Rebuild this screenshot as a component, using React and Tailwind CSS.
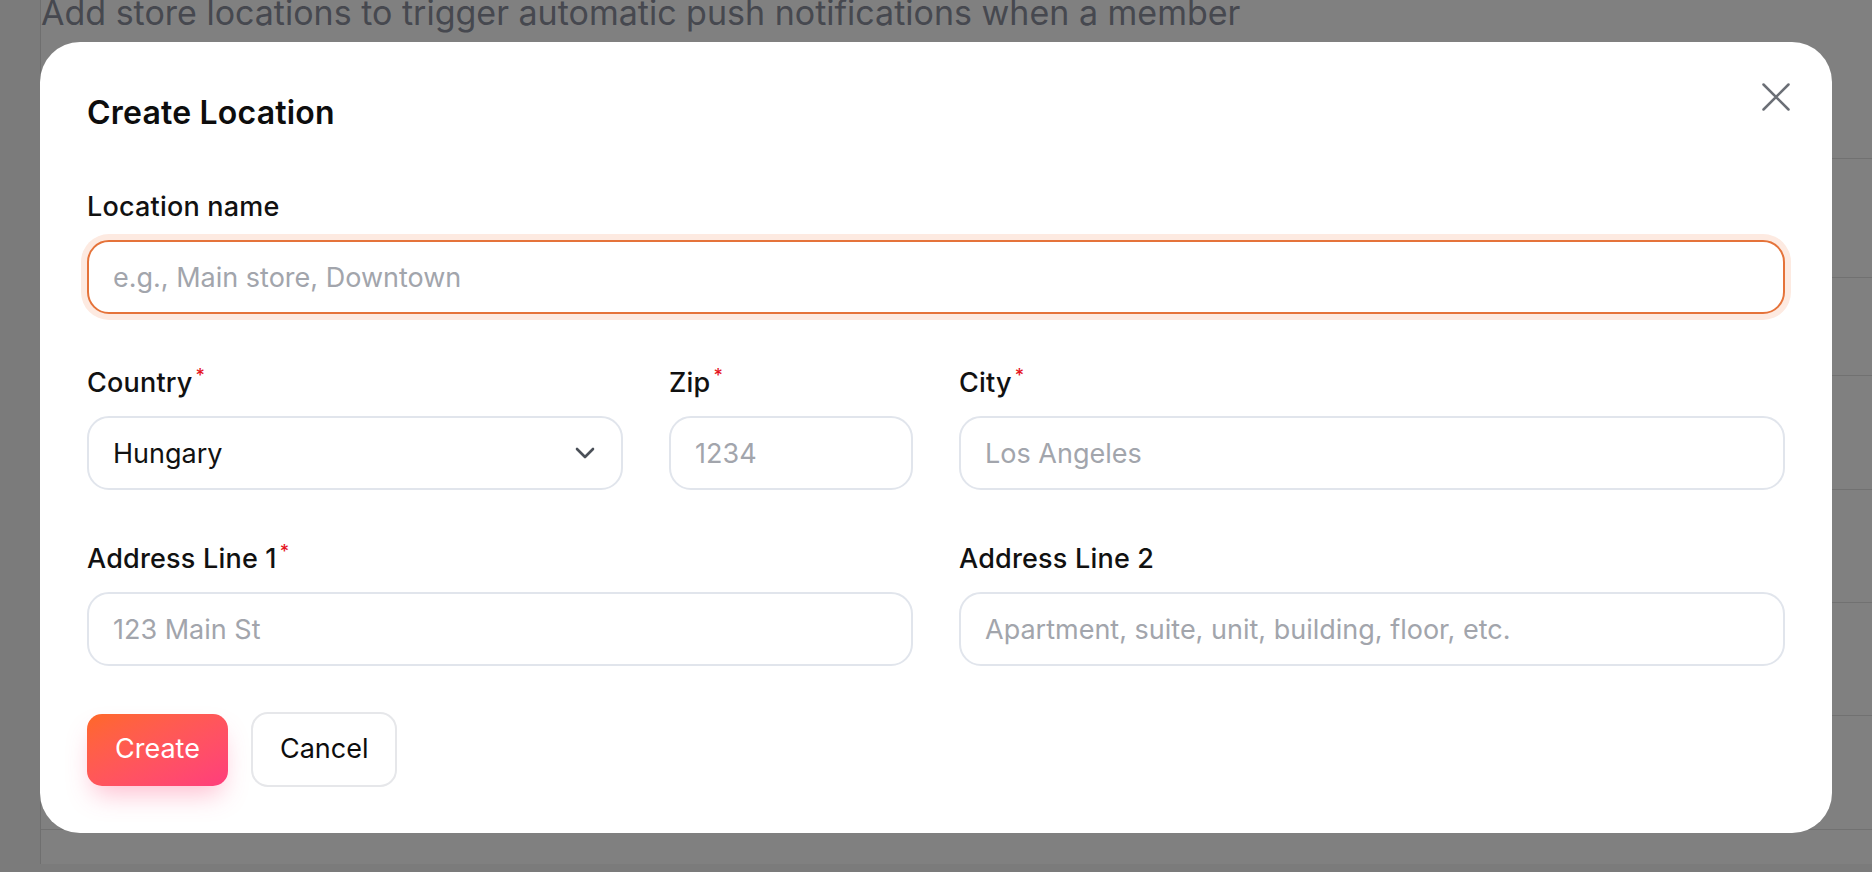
import React from "react";

function Req() {
  return (
    <span className="ml-[3px] align-super text-[18px] leading-none text-[#e5141f]">*</span>
  );
}

function Label({ children, req }) {
  return (
    <div className="mb-[15px] text-[27px] font-medium leading-[36px] tracking-[0.2px] text-[#111111]">
      {children}
      {req && <Req />}
    </div>
  );
}

function Field({ placeholder }) {
  return (
    <div className="flex h-[74px] items-center rounded-[22px] border-2 border-[#e1e5ec] bg-white px-[24px] pt-[3px]">
      <input
        className="w-full bg-transparent text-[27px] text-[#111] outline-none placeholder:text-[#a2a5ac]"
        placeholder={placeholder}
      />
    </div>
  );
}

export default function App() {
  const rows = [126, 119, 98, 114, 113, 113, 114];
  return (
    <div
      className="relative h-[872px] w-[1872px] overflow-hidden bg-[#7b7b7b]"
      style={{ fontFamily: "Inter, 'Noto Sans', sans-serif" }}
    >
      <div className="ml-[40px] h-full border-l border-[#6f6f6f] bg-[#808080]">
        <div className="-mt-[8px] whitespace-nowrap text-[34px] leading-[41px] text-[#46484f]">
          Add store locations to trigger automatic push notifications when a member
        </div>
        <div className="flex flex-col">
          {rows.map((h, i) => (
            <div key={i} className="border-b border-[#717171]" style={{ height: h }} />
          ))}
        </div>
      </div>

      {/* Modal */}
      <div className="absolute left-[40px] top-[42px] h-[791px] w-[1792px] rounded-[40px] bg-white px-[47px] pt-[47px]">
        <button className="absolute right-[42px] top-[41px] text-[#6b6f76]">
          <svg width="28" height="28" viewBox="0 0 28 28" fill="none" stroke="currentColor" strokeWidth="2.5" strokeLinecap="round">
            <path d="M1.5 1.5L26.5 26.5M26.5 1.5L1.5 26.5" />
          </svg>
        </button>

        <h2 className="text-[32px] font-semibold leading-[48px] tracking-[0.2px] text-[#0d0d0d]">Create Location</h2>

        <div className="mt-[52px]">
          <Label>Location name</Label>
          <div className="flex h-[74px] items-center rounded-[22px] border-2 border-[#e5733a] bg-white px-[24px] pt-[3px] ring-[6px] ring-[#fdeae1]">
            <input
              className="w-full bg-transparent text-[27px] text-[#111] outline-none placeholder:text-[#a2a5ac]"
              placeholder="e.g., Main store, Downtown"
            />
          </div>
        </div>

        <div className="mt-[51px] grid grid-cols-2 gap-x-[46px] gap-y-[51px]">
          <div className="grid grid-cols-[536px_1fr] gap-x-[46px]">
            <div>
              <Label req>Country</Label>
              <div className="flex h-[74px] items-center justify-between rounded-[22px] border-2 border-[#e1e5ec] bg-white pl-[24px] pr-[26px]">
                <span className="pt-[3px] text-[27px] text-[#111]">Hungary</span>
                <svg width="20" height="12" viewBox="0 0 20 12" fill="none" stroke="#4b5058" strokeWidth="2.6" strokeLinecap="round" strokeLinejoin="round">
                  <path d="M2 2L10 10L18 2" />
                </svg>
              </div>
            </div>
            <div>
              <Label req>Zip</Label>
              <Field placeholder="1234" />
            </div>
          </div>
          <div>
            <Label req>City</Label>
            <Field placeholder="Los Angeles" />
          </div>
          <div>
            <Label req>Address Line 1</Label>
            <Field placeholder="123 Main St" />
          </div>
          <div>
            <Label>Address Line 2</Label>
            <Field placeholder="Apartment, suite, unit, building, floor, etc." />
          </div>
        </div>

        <div className="mt-[46px] flex items-center gap-[23px]">
          <button className="h-[72px] rounded-[15px] bg-linear-to-br from-[#ff6826] to-[#ff3d7c] px-[28px] text-[27px] text-white shadow-[0_14px_26px_-6px_rgba(255,70,120,0.35)]">
            Create
          </button>
          <button className="h-[75px] rounded-[17px] border-2 border-[#e6e7ea] bg-white px-[27px] text-[27px] text-[#0d0d0d]">
            Cancel
          </button>
        </div>
      </div>
    </div>
  );
}
